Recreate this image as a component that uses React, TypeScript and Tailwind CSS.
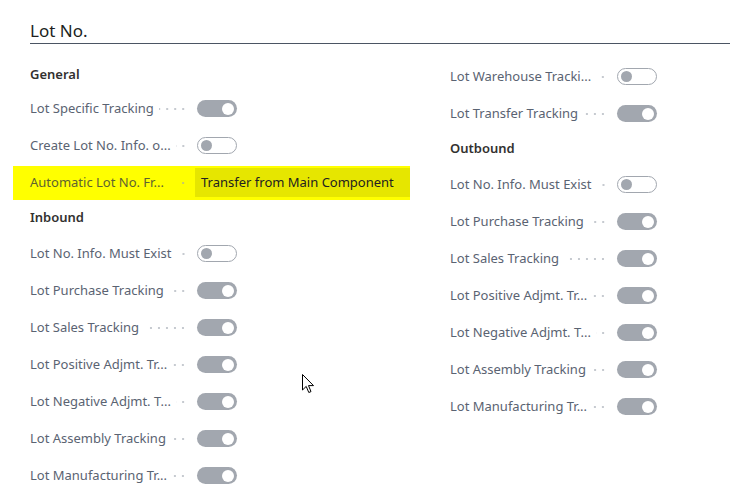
import React from 'react';

type Row =
  | { kind: 'header'; label: string; first?: boolean }
  | { kind: 'toggle'; label: string; on: boolean }
  | { kind: 'value'; label: string; value: string };

const leftRows: Row[] = [
  { kind: 'header', label: 'General', first: true },
  { kind: 'toggle', label: 'Lot Specific Tracking', on: true },
  { kind: 'toggle', label: 'Create Lot No. Info. o...', on: false },
  { kind: 'value', label: 'Automatic Lot No. Fr...', value: 'Transfer from Main Component' },
  { kind: 'header', label: 'Inbound' },
  { kind: 'toggle', label: 'Lot No. Info. Must Exist', on: false },
  { kind: 'toggle', label: 'Lot Purchase Tracking', on: true },
  { kind: 'toggle', label: 'Lot Sales Tracking', on: true },
  { kind: 'toggle', label: 'Lot Positive Adjmt. Tr...', on: true },
  { kind: 'toggle', label: 'Lot Negative Adjmt. T...', on: true },
  { kind: 'toggle', label: 'Lot Assembly Tracking', on: true },
  { kind: 'toggle', label: 'Lot Manufacturing Tr...', on: true },
];

const rightRows: Row[] = [
  { kind: 'toggle', label: 'Lot Warehouse Tracki...', on: false },
  { kind: 'toggle', label: 'Lot Transfer Tracking', on: true },
  { kind: 'header', label: 'Outbound' },
  { kind: 'toggle', label: 'Lot No. Info. Must Exist', on: false },
  { kind: 'toggle', label: 'Lot Purchase Tracking', on: true },
  { kind: 'toggle', label: 'Lot Sales Tracking', on: true },
  { kind: 'toggle', label: 'Lot Positive Adjmt. Tr...', on: true },
  { kind: 'toggle', label: 'Lot Negative Adjmt. T...', on: true },
  { kind: 'toggle', label: 'Lot Assembly Tracking', on: true },
  { kind: 'toggle', label: 'Lot Manufacturing Tr...', on: true },
];

const Toggle: React.FC<{ on: boolean }> = ({ on }) =>
  on ? (
    <div className="flex items-center justify-end w-10 h-[17px] rounded-full bg-[#a2a7af] pr-[3px]">
      <div className="w-3 h-3 rounded-full bg-white" />
    </div>
  ) : (
    <div className="flex items-center w-10 h-[17px] rounded-full border border-[#a2a7af] bg-white pl-[3px]">
      <div className="w-[11px] h-[11px] rounded-full bg-[#a2a7af]" />
    </div>
  );

const Label: React.FC<{ text: string }> = ({ text }) => (
  <div className="flex items-center w-[167px] shrink-0">
    <span className="whitespace-nowrap">{text}</span>
    <div className="flex-1 h-2 ml-[5px] mr-[10px] bg-[radial-gradient(circle,#c6cad0_0.8px,transparent_1.3px)] bg-[length:8px_8px] bg-repeat-x bg-right" />
  </div>
);

const FieldRow: React.FC<{ row: Row }> = ({ row }) => {
  if (row.kind === 'header') {
    return (
      <div
        className={`flex items-center font-semibold text-[#323130] ${row.first ? 'h-[31px]' : 'h-[34px]'}`}
      >
        {row.label}
      </div>
    );
  }

  if (row.kind === 'value') {
    return (
      <div className="flex items-center h-[37px]">
        <div className="flex items-center w-[397px] h-[34px] -ml-[17px] pl-[17px] bg-[#ffff00]">
          <div className="flex items-center w-[165px] shrink-0">
            <span className="whitespace-nowrap text-[#5e6330]">{row.label}</span>
            <div className="flex-1 h-2 ml-[15px] mr-[8px] bg-[radial-gradient(circle,#c6c86a_0.8px,transparent_1.3px)] bg-[length:8px_8px] bg-repeat-x bg-right" />
          </div>
          <div className="flex items-center flex-1 h-[29px] px-[6px] bg-[#e6e600] text-[#212121]">
            {row.value}
          </div>
        </div>
      </div>
    );
  }

  return (
    <div className="flex items-center h-[37px]">
      <Label text={row.label} />
      <Toggle on={row.on} />
    </div>
  );
};

const Cursor: React.FC = () => (
  <svg className="absolute left-[302px] top-[374px]" width="13" height="20" viewBox="0 0 13 20">
    <path
      d="M0.5 0.5 L0.5 16 L4.2 12.4 L6.8 18.5 L9 17.6 L6.5 11.6 L11.5 11.6 Z"
      fill="#ffffff"
      stroke="#000000"
      strokeWidth="1"
      strokeLinejoin="miter"
    />
  </svg>
);

export default function App() {
  return (
    <div className="relative w-[730px] h-[495px] overflow-hidden bg-white pl-[30px] font-['Noto_Sans',sans-serif] text-[13px] text-[#5a6372]">
      <div className="pt-[19px] pb-[1px] border-b border-[#4b5563] text-[17px] leading-[23px] text-[#201f1e]">
        Lot No.
      </div>

      <div className="flex mt-[15px]">
        <div className="flex flex-col w-[420px]">
          {leftRows.map((row, i) => (
            <FieldRow key={i} row={row} />
          ))}
        </div>
        <div className="flex flex-col flex-1 -mt-px">
          {rightRows.map((row, i) => (
            <FieldRow key={i} row={row} />
          ))}
        </div>
      </div>

      <Cursor />
    </div>
  );
}
